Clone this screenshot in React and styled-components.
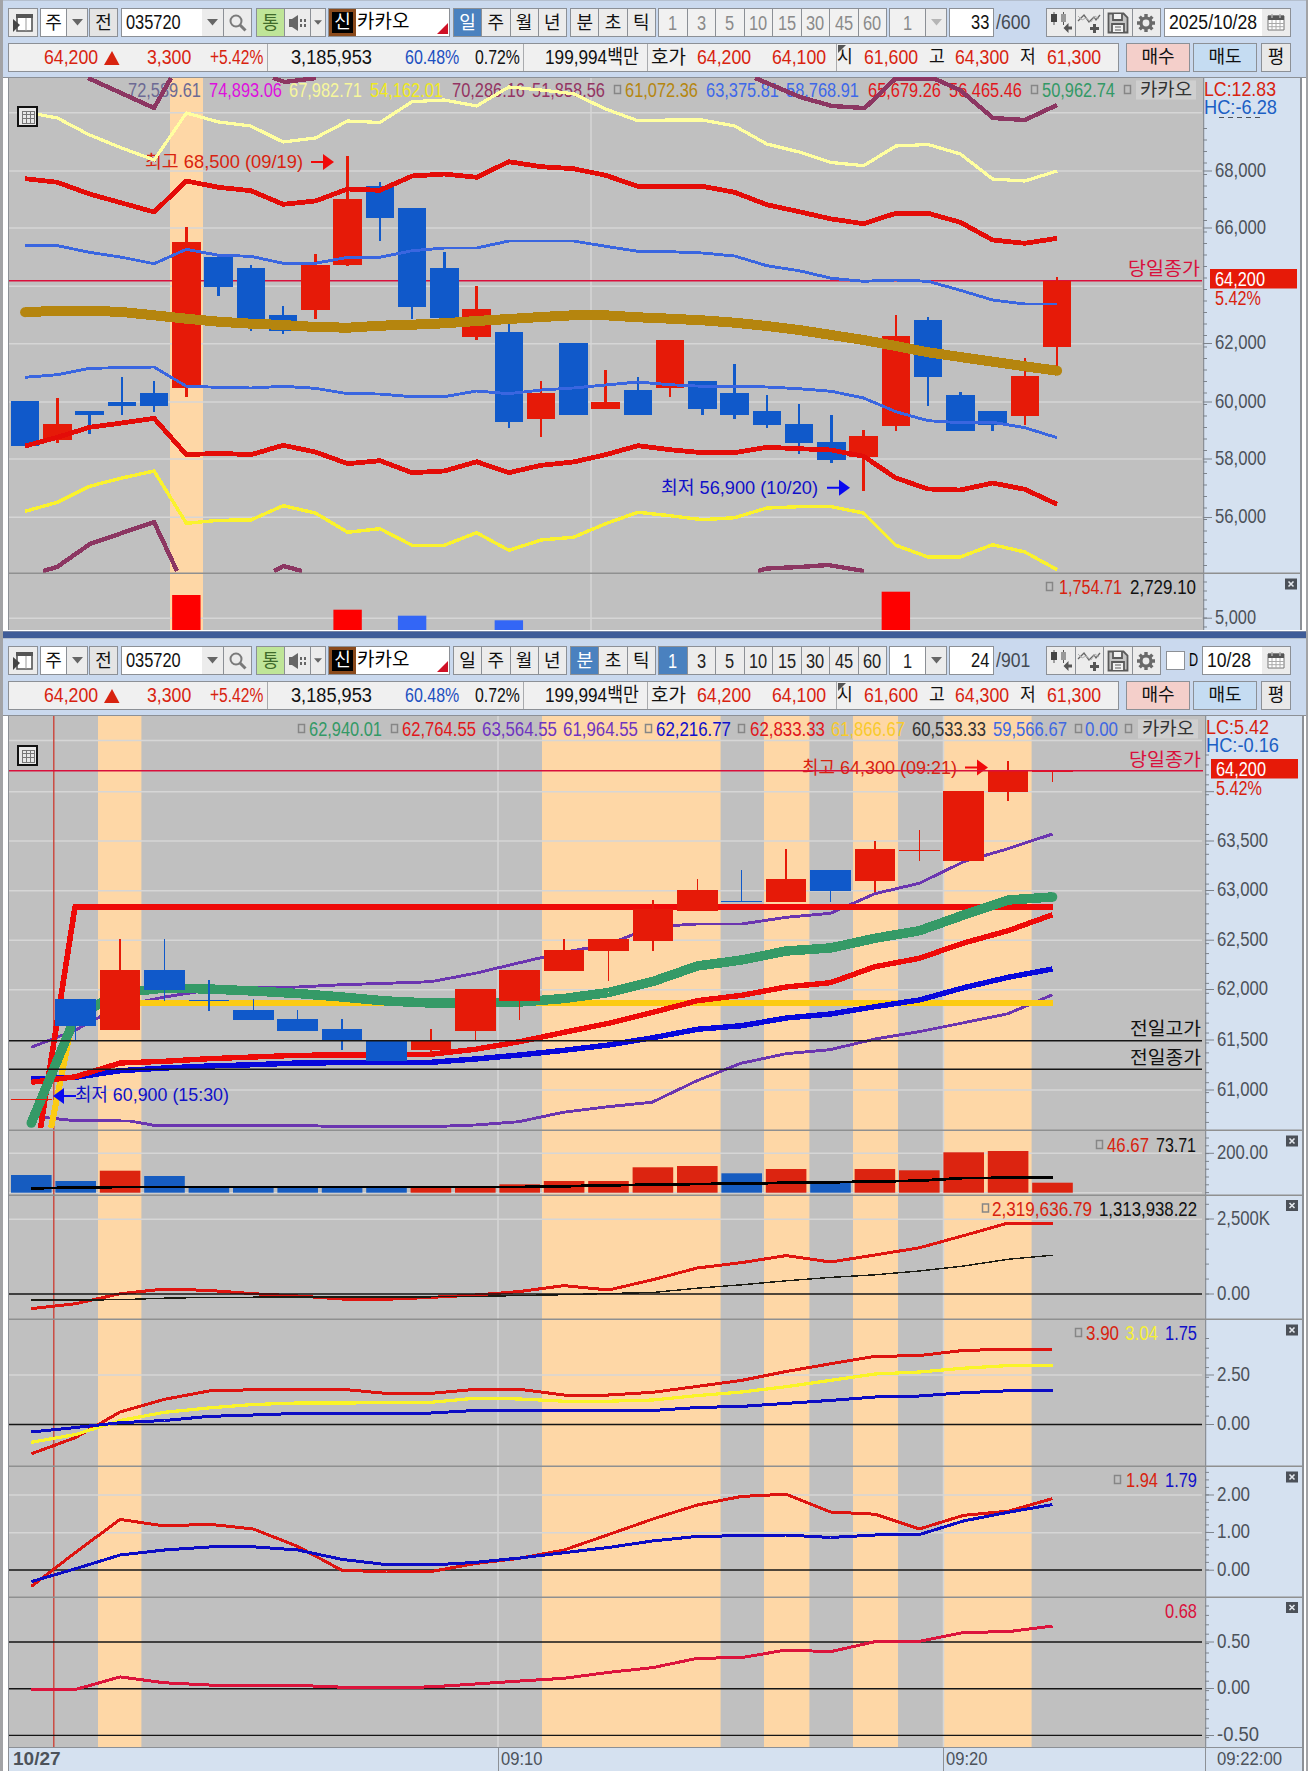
import React from 'react';
import styled, { createGlobalStyle } from 'styled-components';

const colors = {
  frame: '#a2a3a6',
  header: '#cad9ee',
  axis: '#d5e1f0',
  plot: '#c0c0c0',
  grid: '#d6d6d6',
  border: '#8c9096',
  divider: '#8f9090',
  band: '#fed7a6',
  up: '#e61a08',
  down: '#1059ca',
  crimson: '#d9103c',
  tick: '#7d838b',
  label: '#4c525a',
};

const fontStack = "'Liberation Sans', 'Noto Sans CJK KR', sans-serif";

const GlobalStyle = createGlobalStyle`
  * { box-sizing: border-box; }
  body {
    margin: 0;
    background: ${colors.header};
    font-family: ${fontStack};
  }
`;

const Page = styled.div`
  width: 1308px;
  height: 1771px;
  overflow: hidden;
  border-left: 3px solid ${colors.frame};
  border-right: 2px solid ${colors.frame};
  background: ${colors.header};
`;

const Window = styled.section`
  display: flex;
  flex-direction: column;
  height: ${p => p.$height}px;
  overflow: hidden;
`;

const Splitter = styled.div`
  height: 7px;
  background: #3f5c98;
  border-top: 1px solid #7584a5;
`;

const HeaderArea = styled.header`
  display: flex;
  flex-direction: column;
  gap: 6px;
  height: 77px;
  padding: 7px 0 0 5px;
  border-top: 1px solid #b4bfce;
`;

const Row = styled.div`
  display: flex;
  height: 29px;
`;

const Group = styled.div`
  display: flex;
  flex: none;
  width: ${p => p.$w}px;
  height: 29px;
  margin-left: ${p => p.$ml || 0}px;
  border: 1.5px solid ${colors.border};
  background: ${p => p.$bg || '#fff'};
`;

const ToolButton = styled.div`
  display: flex;
  align-items: center;
  justify-content: center;
  flex: ${p => (p.$w ? 'none' : '1 1 0')};
  width: ${p => (p.$w ? `${p.$w}px` : 'auto')};
  background: ${p => (p.$active ? '#4a81bf' : p.$bg || '#ececec')};
  color: ${p => (p.$active ? '#fff' : p.$color || '#111')};
  font-size: ${p => p.$size || 18}px;
  line-height: 26px;
  white-space: nowrap;

  & + & {
    border-left: 1px solid ${colors.border};
  }
`;

// tall, condensed digits
const Squeeze = styled.span`
  display: inline-block;
  transform: scaleX(${p => p.$sx || 0.82});
  transform-origin: ${p => p.$from || 'center'};
`;

const Field = styled.div`
  flex: 1;
  min-width: 0;
  padding: 0 4px;
  text-align: ${p => p.$align || 'left'};
  background: #fff;
  color: #111;
  font-size: 20px;
  line-height: 26px;
  white-space: nowrap;
`;

const Total = styled.div`
  width: 52px;
  padding-left: 2px;
  color: #444a52;
  font-size: 20px;
  line-height: 29px;
`;

const StockBadge = styled.div`
  width: 27px;
  border: 3px solid #8a4a1c;
  background: #000;
  color: #fff;
  font-size: 18px;
  line-height: 20px;
  text-align: center;
`;

const NameField = styled.div`
  flex: 1;
  display: flex;
  justify-content: space-between;
  align-items: flex-end;
  padding: 0 1px 2px 1px;
  font-size: 19px;
  line-height: 25px;
`;

const Corner = styled.i`
  border-left: 11px solid transparent;
  border-bottom: 11px solid #cf1126;
`;

const CheckBox = styled.div`
  width: 19px;
  height: 19px;
  margin: 5px 4px 0 5px;
  border: 1px solid ${colors.border};
  background: #fff;
`;

const CheckLabel = styled.div`
  width: 13px;
  font-size: 18px;
  line-height: 28px;
`;

const Quote = styled.div`
  display: flex;
  width: 1111px;
  height: 29px;
  border: 1.5px solid ${colors.border};
  background: #f0f0f0;
`;

const Segment = styled.div`
  display: flex;
  position: relative;
  flex: none;
  width: ${p => p.$w}px;

  & + & {
    border-left: 1px solid #a9abae;
  }
`;

const Value = styled.span`
  flex: none;
  width: ${p => p.$w}px;
  margin-left: ${p => p.$ml || 0}px;
  color: ${p => p.$color || '#111'};
  font-size: ${p => p.$size || 20}px;
  line-height: 27px;
  white-space: nowrap;
  transform: scaleX(${p => p.$sx || 0.885});
  transform-origin: left;
`;

const Flag = styled.i`
  position: absolute;
  left: 1px;
  top: 1px;
  border-top: 8px solid #555;
  border-right: 8px solid transparent;
`;

const TradeButton = styled.div`
  width: ${p => p.$w}px;
  height: 29px;
  margin-left: ${p => p.$ml}px;
  border: 1.5px solid ${colors.border};
  background: ${p => p.$bg};
  color: #111;
  font-size: 18px;
  line-height: 26px;
  text-align: center;
`;

const Panes = styled.div`
  display: flex;
  flex-direction: column;
  flex: 1;
  padding-left: 5px;
  background: #fff;
  box-shadow: inset 0 1px 0 ${colors.border};
`;

const Pane = styled.div`
  display: flex;
  height: ${p => p.$h}px;
  width: ${p => p.$w}px;
  border-left: 1px solid ${colors.border};
  border-right: 2px solid ${colors.border};
`;

const Plot = styled.svg`
  flex: none;
  display: block;
  background: ${colors.plot};
`;

const Scale = styled.svg`
  flex: none;
  display: block;
  background: ${colors.axis};
`;

const TimeAxis = styled.div`
  display: flex;
  width: 1296px;
  height: 24px;
  border: 1px solid ${colors.border};
  border-width: 1px 2px 0 1px;
  background: ${colors.axis};
  color: ${colors.label};
  font-size: 19px;
  line-height: 22px;
`;

const TimeCell = styled.div`
  width: ${p => p.$w}px;
  padding-left: ${p => p.$pad}px;
  font-weight: ${p => (p.$bold ? 700 : 400)};

  & + & {
    border-left: 1px solid ${colors.border};
  }
`;

/* ---------- icons ---------- */

const Caret = ({ size = 11, color = '#666' }) => (
  <svg width={size} height={size / 2 + 1} viewBox="0 0 12 7">
    <path d="M0 0h12L6 7z" fill={color} />
  </svg>
);

const DockIcon = () => (
  <svg width="22" height="22" viewBox="0 0 22 22">
    <path d="M5 3h15v16H5z" fill="#fff" stroke="#555" strokeWidth="1.6" />
    <path d="M4 2h17v4H4z" fill="#555" />
    <path d="M14 6v13" stroke="#999" />
    <path d="M1 7l7 6-7 7z" fill="#444" />
  </svg>
);

const SearchIcon = () => (
  <svg width="20" height="20" viewBox="0 0 20 20" fill="none" stroke="#7a7a7a">
    <circle cx="8" cy="8" r="5.5" strokeWidth="2" />
    <path d="M12 12l5.5 5.5" strokeWidth="3" />
  </svg>
);

const SpeakerIcon = () => (
  <svg width="20" height="18" viewBox="0 0 20 18" fill="#666">
    <path d="M1 5h3l6-4v16l-6-4H1z" />
    <path d="M12 5h2v3h-2zM16 5h2v3h-2zM12 10h2v3h-2zM16 10h2v3h-2z" />
  </svg>
);

const CandleIcon = () => (
  <svg width="24" height="24" viewBox="0 0 24 24">
    <path d="M5 1v13M14.500 1v13" stroke="#555" />
    <path d="M2 3h6v8H2z" fill="#444" />
    <path d="M12 3h5v8h-5z" fill="#999" />
    <path d="M14.500 17l5-5v3.500h3.500v3h-3.500v3.500z" fill="#555" />
  </svg>
);

const TrendIcon = () => (
  <svg width="24" height="24" viewBox="0 0 24 24" fill="none">
    <path d="M1 10l6-6 5 7 5-5 2 3 4-5" stroke="#666" strokeWidth="1.3" />
    <path d="M1 5l4 4 4-2 5 4 4-6 4 3" stroke="#b0b0b0" />
    <path d="M17.500 13v9M13 17.500h9" stroke="#555" strokeWidth="3" />
  </svg>
);

const SaveIcon = () => (
  <svg width="22" height="22" viewBox="0 0 22 22" fill="none" stroke="#5a5a5a" strokeWidth="1.8">
    <path d="M1.500 1.500h15l4 4v15h-19z" fill="#c4c4c4" />
    <path d="M6 2v6h9V2" fill="#f2f2f2" />
    <path d="M5 20v-8h12v8" fill="#f2f2f2" />
    <path d="M8 15h6M8 18h6" strokeWidth="1.2" />
  </svg>
);

const GearIcon = () => (
  <svg width="20" height="20" viewBox="-10 -10 20 20" fill="none" stroke="#6a6a6a">
    <circle r="5" strokeWidth="3.2" />
    {[0, 45, 90, 135].map(a => (
      <path key={a} d="M0 -9v3.500M0 5.500v3.500" strokeWidth="3.400" transform={`rotate(${a})`} />
    ))}
  </svg>
);

const CalendarIcon = () => (
  <svg width="18" height="17" viewBox="0 0 18 17">
    <path d="M1 2h16v14H1z" fill="#fff" stroke="#777" />
    <path d="M1 1.500h16v4.500H1z" fill="#555" />
    <path d="M5 0v4M13 0v4" stroke="#aaa" strokeWidth="1.5" />
    <path d="M1 9.500h16M1 12.700h16M5 6v10M9 6v10M13 6v10" stroke="#aaa" />
  </svg>
);

/* ---------- header ---------- */

const Toolbar = ({ minute }) => {
  const minuteBg = minute ? '#ececec' : '#f1f1f1';
  const minuteColor = minute ? '#222' : '#8a8a8a';
  return (
    <Row>
      <Group $w={30}><ToolButton><DockIcon /></ToolButton></Group>
      <Group $w={48} $ml={2}>
        <ToolButton $bg="#fff">주</ToolButton>
        <ToolButton $w={21}><Caret /></ToolButton>
      </Group>
      <Group $w={29} $ml={1}><ToolButton $bg="#e4e4e4">전</ToolButton></Group>
      <Group $w={131} $ml={3}>
        <Field><Squeeze $from="left">035720</Squeeze></Field>
        <ToolButton $w={21}><Caret /></ToolButton>
        <ToolButton $w={28}><SearchIcon /></ToolButton>
      </Group>
      <Group $w={70} $ml={4}>
        <ToolButton $w={27} $bg="#bfe598" $color="#3f6b2a">통</ToolButton>
        <ToolButton><SpeakerIcon /></ToolButton>
        <ToolButton $w={15}><Caret size={8} /></ToolButton>
      </Group>
      <Group $w={122} $ml={2}>
        <StockBadge>신</StockBadge>
        <NameField>카카오<Corner /></NameField>
      </Group>
      <Group $w={114} $ml={3}>
        {['일', '주', '월', '년'].map((t, i) => (
          <ToolButton key={t} $active={!minute && i === 0}>{t}</ToolButton>
        ))}
      </Group>
      <Group $w={86} $ml={3}>
        {['분', '초', '틱'].map((t, i) => (
          <ToolButton key={t} $active={minute && i === 0}>{t}</ToolButton>
        ))}
      </Group>
      <Group $w={229} $ml={2}>
        {[1, 3, 5, 10, 15, 30, 45, 60].map(n => (
          <ToolButton key={n} $size={20} $bg={minuteBg} $color={minuteColor} $active={minute && n === 1}>
            <Squeeze>{n}</Squeeze>
          </ToolButton>
        ))}
      </Group>
      <Group $w={58} $ml={2}>
        <ToolButton $size={20} $bg={minute ? '#fff' : '#f1f1f1'} $color={minuteColor}>
          <Squeeze>1</Squeeze>
        </ToolButton>
        <ToolButton $w={21}><Caret color={minute ? '#666' : '#b5b5b5'} /></ToolButton>
      </Group>
      <Group $w={45} $ml={2}>
        <Field $align="right"><Squeeze $from="right">{minute ? 24 : 33}</Squeeze></Field>
      </Group>
      <Total><Squeeze $sx={0.88} $from="left">{minute ? '/901' : '/600'}</Squeeze></Total>
      <Group $w={115}>
        <ToolButton><CandleIcon /></ToolButton>
        <ToolButton><TrendIcon /></ToolButton>
        <ToolButton><SaveIcon /></ToolButton>
        <ToolButton><GearIcon /></ToolButton>
      </Group>
      {minute && <CheckBox />}
      {minute && <CheckLabel><Squeeze $sx={0.7} $from="left">D</Squeeze></CheckLabel>}
      <Group $w={minute ? 89 : 127} $ml={minute ? 0 : 3}>
        <Field><Squeeze $sx={0.88} $from="left">{minute ? '10/28' : '2025/10/28'}</Squeeze></Field>
        <ToolButton $w={28}><CalendarIcon /></ToolButton>
      </Group>
    </Row>
  );
};

const RED = '#d8230f';

const QuoteRow = () => (
  <Row>
    <Quote>
      <Segment $w={258}>
        <Value $ml={35} $w={60} $color={RED}>64,200</Value>
        <svg width="16" height="26" viewBox="0 0 16 26"><path d="M8 7l7.500 14H0z" fill={RED} /></svg>
        <Value $ml={27} $w={63} $color={RED}>3,300</Value>
        <Value $w={56} $sx={0.78} $color={RED}>+5.42%</Value>
      </Segment>
      <Segment $w={256}>
        <Value $ml={23} $w={114} $sx={0.91}>3,185,953</Value>
        <Value $w={70} $sx={0.8} $color="#1c4fc0">60.48%</Value>
        <Value $w={47} $sx={0.79}>0.72%</Value>
      </Segment>
      <Segment $w={124}><Value $ml={21} $w={98} $sx={0.86}>199,994백만</Value></Segment>
      <Segment $w={189}>
        <Value $ml={3} $w={46} $size={19} $sx={1}>호가</Value>
        <Value $w={75} $color={RED}>64,200</Value>
        <Value $w={58} $color={RED}>64,100</Value>
      </Segment>
      <Segment $w={280}>
        <Flag />
        <Value $w={27} $size={18} $sx={0.95}>시</Value>
        <Value $w={65} $color={RED}>61,600</Value>
        <Value $w={26} $size={18} $sx={0.95}>고</Value>
        <Value $w={65} $color={RED}>64,300</Value>
        <Value $w={27} $size={18} $sx={0.95}>저</Value>
        <Value $w={60} $color={RED}>61,300</Value>
      </Segment>
    </Quote>
    <TradeButton $ml={7} $w={64} $bg="#f4cfca">매수</TradeButton>
    <TradeButton $ml={3} $w={64} $bg="#c5dcf2">매도</TradeButton>
    <TradeButton $ml={4} $w={30} $bg="#e8e8e8">평</TradeButton>
  </Row>
);

/* ---------- chart parts ---------- */

// y is the vertical middle of the digits, w the drawn width
const Label = ({ x, y, w, fill = colors.label, size = 20, children }) => (
  <text
    x={x}
    y={y + size * 0.36}
    fill={fill}
    fontSize={size}
    fontFamily={fontStack}
    textLength={w}
    lengthAdjust="spacingAndGlyphs"
  >
    {children}
  </text>
);

const Marker = ({ x, y }) => (
  <rect x={x + 0.5} y={y - 4.5} width="6" height="8" fill="none" stroke="#868686" strokeWidth="1.5" />
);

const Line = ({ xs, ys, color, width }) => (
  <polyline
    points={ys.map((y, i) => `${xs(i)},${y}`).join(' ')}
    fill="none"
    stroke={color}
    strokeWidth={width}
    strokeLinejoin="round"
    shapeRendering="crispEdges"
  />
);

const Path = ({ d, color, width }) => (
  <path d={d} fill="none" stroke={color} strokeWidth={width} strokeLinejoin="round" shapeRendering="crispEdges" />
);

const HLines = ({ ys, color = colors.grid, width = 1.5 }) =>
  ys.map(y => <path key={y} d={`M9 ${y}H1202`} stroke={color} strokeWidth={width} />);

// candle: [up, bodyTop, bodyBottom, high, low]
const Candles = ({ data, xs, body, wick }) => (
  <g shapeRendering="crispEdges">
    {data.map(([up, top, bottom, high = top, low = bottom], i) => {
      const color = up ? colors.up : colors.down;
      return (
        <g key={i} fill={color}>
          <rect x={xs(i) - wick / 2} y={high} width={wick} height={low - high} />
          <rect x={xs(i) - body / 2} y={top} width={body} height={Math.max(bottom - top, 1.3)} />
        </g>
      );
    })}
  </g>
);

const Arrow = ({ x, y, color, flip }) => (
  <path
    d="M0 -1h12v-7l11 8-11 8v-7H0z"
    fill={color}
    transform={`translate(${x} ${y}) scale(${flip ? -1 : 1} 1)`}
  />
);

const NameTag = ({ x, y }) => (
  <g>
    <rect x={x} y={y - 9.5} width="60" height="19" fill="#cfcfcf" />
    <Label x={x + 4} y={y} w={52} fill="#333" size={18}>카카오</Label>
  </g>
);

const TableIcon = ({ x, y }) => (
  <g fill="none" stroke="#111" shapeRendering="crispEdges">
    <rect x={x} y={y} width="19" height="19" fill="#e8e8e8" strokeWidth="2" />
    <path
      d={`M${x + 4} ${y + 4}h12v12h-12zM${x + 4} ${y + 7}h12M${x + 4} ${y + 11}h12M${x + 8} ${y + 4}v12M${x + 12} ${y + 4}v12`}
      stroke="#777"
    />
  </g>
);

const CloseBox = ({ x, y }) => (
  <g>
    <rect x={x} y={y - 5.5} width="12" height="11" fill="#4b5058" />
    <path d={`M${x + 3.500} ${y - 2.500}l5 5M${x + 8.500} ${y - 2.500}l-5 5`} stroke="#e4e8ee" strokeWidth="1.600" />
  </g>
);

const Ticks = ({ x, from, to, step }) => {
  const d = [];
  for (let y = from; y <= to; y += step) d.push(`M${x} ${y}h4`);
  return <path d={d.join('')} stroke={colors.tick} />;
};

const AxisLabels = ({ x, items }) =>
  items.map(([y, text, w]) => (
    <g key={text}>
      <path d={`M${x} ${y + 1.5}h9`} stroke={colors.tick} />
      <Label x={x + 12} y={y} w={w}>{text}</Label>
    </g>
  ));

const PriceTag = ({ x, y }) => (
  <g>
    <Label x={x + 11} y={y + 18.5} w={46} fill={RED}>5.42%</Label>
    <rect x={x + 6} y={y - 10} width="87" height="19.500" fill={colors.up} />
    <Label x={x + 11} y={y} w={50} fill="#fff">64,200</Label>
  </g>
);

const ChartPane = ({ top, bottom, split, right, plot, scale, last }) => {
  const h = bottom - top;
  return (
    <Pane $h={h} $w={right - 8}>
      <Plot width={split - 9} height={h} viewBox={`9 ${top} ${split - 9} ${h}`}>
        {plot}
        {!last && <path d={`M9 ${bottom - 0.75}H${split}`} stroke={colors.divider} strokeWidth="1.5" />}
      </Plot>
      <Scale width={right - split - 2} height={h} viewBox={`${split} ${top} ${right - split - 2} ${h}`}>
        <path d={`M${split + 0.5} ${top}V${bottom}`} stroke={colors.border} strokeWidth="1.5" />
        {scale}
        {!last && <path d={`M${split} ${bottom - 0.75}H${right}`} stroke={colors.divider} strokeWidth="1.5" />}
      </Scale>
    </Pane>
  );
};

/* ---------- daily chart ---------- */

const dayX = i => 25.1 + 32.25 * i;

const dayCandles = [
  [0, 402.3, 447.3],
  [1, 425, 441.3, 399.3, 444],
  [0, 411.7, 416, 411.7, 435.3],
  [0, 403, 407, 378.3, 416],
  [0, 394, 407, 381.7, 412.7],
  [1, 243.3, 388.7, 228.3, 397.7],
  [0, 258.3, 288.3, 258.3, 297.3],
  [0, 269, 320, 266, 331.7],
  [0, 315.7, 331.7, 306.7, 334.7],
  [1, 265.7, 311, 255.3, 320],
  [1, 200, 265.7, 156.7, 267],
  [0, 186.7, 219.3, 183.3, 242],
  [0, 209, 308, 209, 320],
  [0, 269, 319, 252.7],
  [1, 309.7, 338.3, 286.7, 340.7],
  [0, 333.3, 423.3, 324, 429.3],
  [1, 393.7, 420.3, 381.7, 438.3],
  [0, 344, 416],
  [1, 402.7, 410, 371],
  [0, 390.7, 416, 378.3],
  [1, 341, 388.7, 341, 397.7],
  [0, 381.7, 410, 381.7, 415.7],
  [0, 394, 416, 365, 420],
  [0, 411.7, 426.3, 396.3, 429],
  [0, 425, 444.3, 405.3, 454.7],
  [0, 442.7, 460.7, 416, 463.7],
  [1, 437, 457.7, 431, 492.3],
  [1, 336.7, 426.7, 315.7, 432.3],
  [0, 321.3, 378.3, 318.3, 406.7],
  [0, 396.3, 432.3, 393.3],
  [0, 411.7, 426.3, 411.7, 432.3],
  [1, 377, 417.3, 359, 426.3],
  [1, 281.7, 348.3, 278, 368],
];

const dayLines = {
  pale: [113, 119, 136, 149, 161, 114, 123, 127, 143, 139, 122, 123.5, 102.7, 101, 107, 88, 91, 94.7, 110, 121.7, 121, 121, 127, 145, 153, 163.5, 166.7, 147, 145.5, 155, 180, 182, 172],
  redUp: [179.7, 183.3, 195, 204, 213, 182, 188.3, 191.7, 205.3, 202, 190, 191.3, 177, 175, 178.3, 162.7, 167.7, 169.7, 176.3, 187.3, 187.3, 187.3, 193.3, 205.7, 212.7, 220, 224.7, 214.3, 214.3, 223.3, 241, 244.3, 239.3],
  blueUp: [246.7, 246.7, 253.3, 258.3, 264.7, 250.3, 256.3, 257.3, 264.3, 264.3, 258.3, 258.3, 251.7, 249, 249, 242, 242, 242, 247.3, 252.3, 252.7, 254, 257, 266.7, 271.7, 279.3, 282.3, 281, 282.3, 291.3, 301, 305, 305],
  gold: [313.3, 311.7, 311.7, 313, 316.3, 319.7, 322.7, 324.7, 326, 328, 328.7, 326.7, 325.7, 324.3, 322, 320, 318, 316.3, 316.3, 318.3, 319.7, 321.3, 323.7, 327, 331, 336, 341, 347, 353.3, 358, 362.7, 367.3, 371.7],
  blueLow: [378.3, 375.7, 369.3, 368.7, 368, 387.3, 388.3, 389, 387.3, 389.3, 394.7, 395, 397.7, 397.7, 392, 394.7, 391, 389, 386, 383, 385.7, 387.3, 387.3, 388, 389.7, 392.3, 399, 412.7, 421.7, 423.7, 423.3, 428.7, 438.7],
  redLow: [447, 438.3, 428.3, 424, 419.3, 455.7, 454.3, 455.7, 446.3, 453, 464.7, 461.7, 473.7, 472, 462.7, 473.7, 466.3, 463, 455.7, 446.7, 450.7, 453.7, 453.7, 448.3, 449.7, 451, 457.3, 479, 490, 491, 484, 490.3, 505.3],
  yellow: [512.3, 503.3, 487.3, 479, 472, 524.3, 521.3, 521, 506.7, 514, 533.3, 529.7, 546.3, 546.3, 533.7, 551.3, 541, 538.3, 524.7, 513.3, 516.7, 520.7, 518.7, 509, 507.7, 507.7, 514, 546.3, 558, 558, 545.7, 553, 570.7],
};

const dayLegend = [
  [128, '72,589.61', '#6d6a94'],
  [209, '74,893.06', '#dd10dd'],
  [289, '67,982.71', '#f7f79c'],
  [370, '54,162.01', '#f0ea20'],
  [452, '70,286.16', '#943462'],
  [532, '51,858.56', '#943462'],
  [625, '61,072.36', '#b5860f'],
  [706, '63,375.81', '#3e68e8'],
  [786, '58,768.91', '#3e68e8'],
  [868, '65,679.26', '#e0181c'],
  [949, '56,465.46', '#e0181c'],
  [1042, '50,962.74', '#339966'],
];

const DayChart = () => (
  <Panes>
    <ChartPane
      top={78}
      bottom={575}
      split={1203}
      right={1302}
      plot={(
        <>
          <rect x="170" y="78" width="33" height="500" fill={colors.band} />
          <HLines ys={[113.7, 172, 229, 287.3, 344.7, 403, 460, 518.3]} />
          <path d="M591 78V575" stroke={colors.grid} strokeWidth="1.5" />
          <path d="M9 78.500H1203" stroke={colors.border} />
          {dayLegend.map(([x, text, fill]) => (
            <Label key={text} x={x} y={90.7} w={73} fill={fill}>{text}</Label>
          ))}
          <Marker x={614} y={91} />
          <Marker x={1031} y={91} />
          <Marker x={1124} y={91} />
          <NameTag x={1136} y={91} />
          <Label x={145} y={162.5} w={158} fill={RED} size={18.5}>최고 68,500 (09/19)</Label>
          <Arrow x={311} y={163} color="#f00a0a" />
          <Label x={661} y={488} w={157} fill="#1010c8" size={18.5}>최저 56,900 (10/20)</Label>
          <Arrow x={827} y={488.7} color="#0a0af0" />
          <Label x={1128} y={270} w={72} fill={colors.crimson} size={18}>당일종가</Label>
          <path d="M9 281.700H1202" stroke={colors.crimson} strokeWidth="1.5" />
          <Candles data={dayCandles} xs={dayX} body={28.4} wick={2.4} />
          <Line xs={dayX} ys={dayLines.pale} color="#ffffa0" width={3.2} />
          <Path d="M88 79L154 109L171 79M273 79L285 83L316 79M755 79L767 84L800 98L832 107L864 109L868 106L895 80L935 80L960 91L993 119L1025 121L1057 106" color="#8c3662" width={4.4} />
          <Path d="M43 572L57 568L90 545L122 534L154 523L177 572M274 572L283.500 567L302 572M758 572L767 569.500L800 568L828 566L864 572" color="#8c3662" width={4.4} />
          <Line xs={dayX} ys={dayLines.redUp} color="#e40c08" width={4.8} />
          <Line xs={dayX} ys={dayLines.blueUp} color="#3a66e0" width={2.9} />
          <Line xs={dayX} ys={dayLines.blueLow} color="#3a66e0" width={2.9} />
          <Line xs={dayX} ys={dayLines.redLow} color="#e40c08" width={4.8} />
          <Line xs={dayX} ys={dayLines.yellow} color="#faf22e" width={3.4} />
          <Line xs={dayX} ys={dayLines.gold} color="#b5850e" width={10} />
          <circle cx={dayX(0)} cy="313.300" r="5" fill="#b5850e" />
          <circle cx={dayX(32)} cy="371.700" r="5" fill="#b5850e" />
          <TableIcon x={18} y={108} />
        </>
      )}
      scale={(
        <>
          <path d="M1203 78.500H1302" stroke={colors.border} />
          <Ticks x={1203} from={129.5} to={572} step={11.5} />
          <Label x={1204} y={89.5} w={72} fill={RED}>LC:12.83</Label>
          <Label x={1204} y={107.5} w={73} fill="#1b5fc4">HC:-6.28</Label>
          <path d="M1219 118.500H1264" stroke={colors.label} strokeDasharray="5 4" />
          <AxisLabels
            x={1203}
            items={[[170.5, '68,000', 51], [227.5, '66,000', 51], [343, '62,000', 51], [401.5, '60,000', 51], [458.5, '58,000', 51], [517, '56,000', 51]]}
          />
          <PriceTag x={1204} y={280} />
        </>
      )}
    />
    <ChartPane
      top={575}
      bottom={631}
      split={1203}
      right={1302}
      last
      plot={(
        <>
          <rect x="170" y="575" width="33" height="60" fill={colors.band} />
          <HLines ys={[619.3]} />
          <path d="M591 575V631" stroke={colors.grid} strokeWidth="1.5" />
          {[[5, 596, 1], [10, 610.7, 1], [12, 616.7, 0], [15, 621.3, 0], [27, 592.7, 1]].map(([i, y, up]) => (
            <rect key={i} x={dayX(i) - 14.2} y={y} width="28.4" height={631 - y} fill={up ? '#fe0000' : '#3366f6'} />
          ))}
          <Marker x={1046} y={588} />
          <Label x={1059} y={587.5} w={63} fill={RED}>1,754.71</Label>
          <Label x={1130} y={587.5} w={66} fill="#111">2,729.10</Label>
        </>
      )}
      scale={(
        <>
          <Ticks x={1203} from={583} to={630} step={9} />
          <AxisLabels x={1203} items={[[617.7, '5,000', 41]]} />
          <CloseBox x={1285} y={585} />
        </>
      )}
    />
  </Panes>
);

/* ---------- minute chart ---------- */

const minX = i => 31.3 + 44.4 * i;

const minCandles = [
  [1, 1098.5, 1099.5],
  [0, 999.3, 1025.7, 999.3, 1040.7],
  [1, 969.7, 1030.3, 939.3],
  [0, 969.7, 990, 939.3, 1000.7],
  [0, 999.5, 1000.5, 980, 1011],
  [0, 1010, 1020.3, 999.3],
  [0, 1019.3, 1030.7, 1010],
  [0, 1029.3, 1041, 1019, 1050.3],
  [0, 1041, 1060.7],
  [1, 1041, 1050.3, 1029.3, 1055],
  [1, 989, 1030.7, 989, 1040.7],
  [1, 969.7, 1001, 969.7, 1020.3],
  [1, 950, 971, 939.3],
  [1, 939.3, 951, 939.3, 981],
  [1, 908.7, 940.7, 900.3, 951],
  [1, 890, 910.7, 879.3],
  [0, 900.7, 901.8, 870.3],
  [1, 879.3, 901.7, 849.3],
  [0, 870.3, 891.3, 870.3, 901.7],
  [1, 849.3, 880.7, 840.7, 892.3],
  [1, 849.8, 850.8, 830, 861.3],
  [1, 791, 861.3],
  [1, 770.7, 792.3, 761, 801.3],
  [1, 770.2, 771.3, 770.7, 782],
];

const minLines = {
  green: [1123, 1016, 993, 988, 989, 991, 993.5, 997, 1001, 1003, 1003, 1002, 998.5, 992.5, 981.5, 966, 960, 951, 948, 938.3, 930.7, 915, 900, 897],
  red: [1082.3, 1076.7, 1063, 1061.3, 1058.7, 1057, 1055.3, 1055, 1055, 1054.3, 1049.3, 1041.7, 1032.3, 1023.3, 1012.3, 1000.7, 995.3, 987, 982.7, 966.7, 958.3, 943, 930.7, 914.7],
  blue: [1079, 1077.3, 1070.7, 1068, 1066, 1064.7, 1063, 1062.7, 1062.7, 1062.3, 1059, 1055, 1050.3, 1045, 1037.7, 1029.3, 1025.7, 1018, 1014, 1006.7, 1000, 987.7, 977.3, 969],
  purpleUp: [1047.3, 1030, 1006, 997, 990, 988, 987, 984.7, 983.3, 981.7, 973.3, 962.7, 952.3, 944.3, 926.7, 924, 924, 917.3, 913.3, 893.7, 883.3, 861.7, 848.7, 834],
};

// [top, up]
const minVolume = [
  [1175, 0], [1181, 0], [1170.7, 1], [1176, 0], [1187.7, 0], [1187.7, 0], [1187.7, 0], [1187.7, 0],
  [1187.7, 0], [1187.7, 1], [1187, 1], [1184.3, 1], [1181, 1], [1181, 1], [1167.3, 1], [1166, 1],
  [1173.3, 0], [1169, 1], [1182.7, 0], [1169, 1], [1170.3, 1], [1152.3, 1], [1151, 1], [1182.7, 1],
];

const minLegend = [
  [309, '62,940.01', '#339966', 73],
  [402, '62,764.55', '#e0181c', 74],
  [482, '63,564.55', '#6f35c0', 75],
  [563, '61,964.55', '#6f35c0', 75],
  [656, '62,216.77', '#1010cc', 75],
  [750, '62,833.33', '#e0181c', 75],
  [831, '61,866.67', '#f8ca2c', 74],
  [912, '60,533.33', '#333', 74],
  [993, '59,566.67', '#4068e0', 74],
  [1085, '0.00', '#4068e0', 33],
];

const bands = [[98, 141.4], [542, 720.6], [764, 809.4], [853, 898], [943.3, 1031.6]];

const MinuteBackdrop = ({ top, bottom }) => (
  <g>
    {bands.map(([a, b]) => (
      <rect key={a} x={a} y={top} width={b - a} height={bottom - top} fill={colors.band} />
    ))}
    <path d={`M498 ${top}V${bottom}M943.500 ${top}V${bottom}`} stroke={colors.grid} strokeWidth="1.5" />
  </g>
);

const DayLine = ({ top, bottom }) => (
  <path d={`M53.800 ${top}V${bottom}`} stroke="#cc3a30" strokeWidth="1.3" />
);

const minPane = { split: 1205, right: 1304 };

const MinuteChart = () => (
  <Panes>
    <ChartPane
      {...minPane}
      top={715}
      bottom={1131}
      plot={(
        <>
          <MinuteBackdrop top={715} bottom={1131} />
          <HLines ys={[740.5, 791.7, 841, 890.7, 940.3, 989.7, 1090]} />
          <path d="M9 715.500H1205" stroke={colors.border} />
          <DayLine top={716} bottom={1131} />
          {minLegend.map(([x, text, fill, w]) => (
            <Label key={text} x={x} y={728.5} w={w} fill={fill}>{text}</Label>
          ))}
          {[298, 391, 645, 738, 1075, 1125].map(x => <Marker key={x} x={x} y={729} />)}
          <NameTag x={1138} y={729} />
          <Label x={802} y={767} w={155} fill={RED} size={18.5}>최고 64,300 (09:21)</Label>
          <Arrow x={965} y={767.5} color="#f00a0a" />
          <Label x={1129} y={760} w={72} fill={colors.crimson} size={18}>당일종가</Label>
          <Path d="M40 1117L75 1120.700L130 1121L154 1125.300L297 1125.300L341 1126.700L430 1126.700L475 1125L519 1121.700L563 1112.300L608 1106.700L652 1102.300L697 1080.700L741 1063.300L786 1053.700L830 1049.700L875 1039L919 1031.700L964 1022.700L1008 1013.700L1052.500 994.700" color="#6b35b0" width={2.9} />
          <Line xs={minX} ys={minLines.purpleUp} color="#6b35b0" width={2.9} />
          <Path d="M51 1128L76 1002.700H1053" color="#fccb12" width={6} />
          <Line xs={minX} ys={minLines.blue} color="#0808dc" width={5.4} />
          <Line xs={minX} ys={minLines.red} color="#ee0a08" width={5.4} />
          <Path d="M40.500 1128L75 906.700H1053" color="#ee0a08" width={5.6} />
          <Line xs={minX} ys={minLines.green} color="#359a67" width={9.5} />
          <circle cx={minX(0)} cy="1123" r="4.800" fill="#359a67" />
          <circle cx={minX(23)} cy="897" r="4.800" fill="#359a67" />
          <Candles data={minCandles} xs={minX} body={40.6} wick={1.4} />
          <path d="M9 770.700H1203" stroke={colors.crimson} strokeWidth="1.5" />
          <HLines ys={[1040.7, 1069.3]} color="#151515" width={1.4} />
          <Label x={1130} y={1028.5} w={71} fill="#111" size={18}>전일고가</Label>
          <Label x={1130} y={1057.5} w={71} fill="#111" size={18}>전일종가</Label>
          <Label x={75} y={1094.5} w={154} fill="#1010c8" size={18.5}>최저 60,900 (15:30)</Label>
          <Arrow x={76} y={1096} color="#0a0af0" flip />
          <TableIcon x={18} y={746} />
        </>
      )}
      scale={(
        <>
          <path d="M1205 715.500H1304" stroke={colors.border} />
          <Ticks x={1205} from={755} to={1128} step={9.93} />
          <Label x={1206} y={727} w={63} fill={RED}>LC:5.42</Label>
          <Label x={1206} y={745} w={73} fill="#1b5fc4">HC:-0.16</Label>
          <path d="M1205 791.700h9" stroke={colors.tick} />
          <AxisLabels
            x={1205}
            items={[[839.5, '63,500', 51], [889, '63,000', 51], [938.7, '62,500', 51], [988, '62,000', 51], [1038.5, '61,500', 51], [1088.5, '61,000', 51]]}
          />
          <PriceTag x={1205} y={769} />
        </>
      )}
    />
    <ChartPane
      {...minPane}
      top={1131}
      bottom={1196}
      plot={(
        <>
          <MinuteBackdrop top={1131} bottom={1196} />
          <HLines ys={[1153.3, 1192.7]} />
          {minVolume.map(([y, up], i) => (
            <rect key={i} x={minX(i) - 20.3} y={y} width="40.6" height={1192.7 - y} fill={up ? '#dc2410' : '#165cc0'} />
          ))}
          <DayLine top={1131} bottom={1196} />
          <Path d="M31 1188.300L119 1187H519L563 1186.300L608 1185.300L697 1184L741 1183.700L786 1182.700L830 1182.300L919 1180.700L964 1178L1053 1177.700" color="#000" width={2.8} />
          <Marker x={1096} y={1145} />
          <Label x={1107} y={1144.5} w={42} fill={RED}>46.67</Label>
          <Label x={1156} y={1144.5} w={40} fill="#111">73.71</Label>
        </>
      )}
      scale={(
        <>
          <Ticks x={1205} from={1138} to={1194} step={7.8} />
          <AxisLabels x={1205} items={[[1151.8, '200.00', 51]]} />
          <CloseBox x={1286} y={1141} />
        </>
      )}
    />
    <ChartPane
      {...minPane}
      top={1196}
      bottom={1320}
      plot={(
        <>
          <MinuteBackdrop top={1196} bottom={1320} />
          <HLines ys={[1219.3]} />
          <DayLine top={1196} bottom={1320} />
          <Line
            xs={minX}
            ys={[1308.6, 1303.7, 1293.7, 1289, 1290.4, 1293.7, 1296, 1299, 1299.3, 1297.4, 1295, 1291.5, 1285.6, 1290, 1279.7, 1268, 1262.6, 1255.6, 1262, 1255, 1247.8, 1235.6, 1223, 1223]}
            color="#e01510"
            width={3}
          />
          <Line
            xs={minX}
            ys={[1300, 1300, 1299.7, 1298.2, 1297.4, 1297.2, 1297, 1297, 1297, 1296.8, 1296.5, 1295.5, 1294.7, 1293.5, 1292.5, 1288.2, 1284.8, 1280.8, 1277.4, 1274.8, 1271, 1266, 1259.3, 1255.2]}
            color="#1c1c14"
            width={1.4}
          />
          <HLines ys={[1294]} color="#151515" width={1.4} />
          <Marker x={982} y={1208.5} />
          <Label x={992} y={1208.5} w={100} fill={RED}>2,319,636.79</Label>
          <Label x={1099} y={1208.5} w={98} fill="#111">1,313,938.22</Label>
        </>
      )}
      scale={(
        <>
          <Ticks x={1205} from={1204.3} to={1296} step={14.95} />
          <AxisLabels x={1205} items={[[1217.5, '2,500K', 53], [1292.5, '0.00', 33]]} />
          <CloseBox x={1286} y={1205.5} />
        </>
      )}
    />
    <ChartPane
      {...minPane}
      top={1320}
      bottom={1467}
      plot={(
        <>
          <MinuteBackdrop top={1320} bottom={1467} />
          <HLines ys={[1375]} />
          <DayLine top={1320} bottom={1467} />
          <HLines ys={[1424.5]} color="#151515" width={1.4} />
          <Line
            xs={minX}
            ys={[1453.8, 1437.5, 1412, 1399.3, 1391, 1389.7, 1389.3, 1389.3, 1393.4, 1393.4, 1389.3, 1389.3, 1395, 1395, 1392.3, 1386.4, 1380.4, 1371.5, 1363.8, 1356.4, 1355.6, 1350.4, 1349.3, 1349]}
            color="#dd1410"
            width={3}
          />
          <Line
            xs={minX}
            ys={[1442.3, 1434.5, 1420.5, 1412.3, 1407.9, 1404.5, 1403, 1403, 1402.7, 1402.3, 1398.2, 1399, 1401.2, 1401.2, 1400, 1395.6, 1392, 1386.7, 1380.4, 1374, 1372, 1368.2, 1365.6, 1365.6]}
            color="#faf428"
            width={3.2}
          />
          <Line
            xs={minX}
            ys={[1432, 1427.5, 1422.7, 1420.5, 1416.4, 1415, 1413.4, 1413.4, 1413.4, 1413, 1410.5, 1410.5, 1410.5, 1410.5, 1410.5, 1407.5, 1406.4, 1403.4, 1400.4, 1397, 1396, 1392.7, 1390.8, 1390.8]}
            color="#0c0cc4"
            width={3}
          />
          <Marker x={1075} y={1333} />
          <Label x={1086} y={1333} w={33} fill={RED}>3.90</Label>
          <Label x={1125} y={1333} w={33} fill="#f6f036">3.04</Label>
          <Label x={1165} y={1333} w={32} fill="#1010c8">1.75</Label>
        </>
      )}
      scale={(
        <>
          <Ticks x={1205} from={1338.5} to={1425} step={9.7} />
          <AxisLabels x={1205} items={[[1373.5, '2.50', 33], [1423, '0.00', 33]]} />
          <CloseBox x={1286} y={1330} />
        </>
      )}
    />
    <ChartPane
      {...minPane}
      top={1467}
      bottom={1598}
      plot={(
        <>
          <MinuteBackdrop top={1467} bottom={1598} />
          <HLines ys={[1495, 1532.7]} />
          <DayLine top={1467} bottom={1598} />
          <HLines ys={[1570]} color="#151515" width={1.4} />
          <Line
            xs={minX}
            ys={[1586.4, 1552.3, 1519.4, 1526, 1524.2, 1529, 1546.4, 1570.5, 1571.6, 1571.6, 1563.5, 1558.3, 1550, 1534.6, 1519, 1505, 1496.4, 1494.2, 1512, 1514.2, 1529, 1515.3, 1511.2, 1498.6]}
            color="#dd1410"
            width={3}
          />
          <Line
            xs={minX}
            ys={[1581.6, 1568.7, 1555, 1550, 1547, 1546.8, 1550, 1559.4, 1564.6, 1565, 1562.4, 1558, 1552.7, 1547.5, 1540.9, 1536.4, 1535.7, 1535, 1537.5, 1535, 1534.6, 1520.9, 1512.3, 1504.6]}
            color="#0c0cc4"
            width={3}
          />
          <Marker x={1114} y={1480} />
          <Label x={1126} y={1480} w={32} fill={RED}>1.94</Label>
          <Label x={1165} y={1480} w={32} fill="#1010c8">1.79</Label>
        </>
      )}
      scale={(
        <>
          <Ticks x={1205} from={1472.4} to={1570} step={7.5} />
          <AxisLabels x={1205} items={[[1493.5, '2.00', 33], [1531, '1.00', 33], [1568.7, '0.00', 33]]} />
          <CloseBox x={1286} y={1477} />
        </>
      )}
    />
    <ChartPane
      {...minPane}
      top={1598}
      bottom={1747}
      last
      plot={(
        <>
          <MinuteBackdrop top={1598} bottom={1747} />
          <DayLine top={1598} bottom={1747} />
          <HLines ys={[1642, 1688.7, 1735.4]} color="#151515" width={1.4} />
          <Line
            xs={minX}
            ys={[1689.4, 1689.4, 1676.9, 1682.8, 1685, 1685, 1685.4, 1687.2, 1687.6, 1686.9, 1684, 1681, 1678.3, 1672.4, 1667.6, 1658.3, 1657.6, 1650, 1651.7, 1641.7, 1641.3, 1632.4, 1631.7, 1626]}
            color="#dc143c"
            width={3}
          />
          <Label x={1165} y={1610.5} w={32} fill={colors.crimson}>0.68</Label>
        </>
      )}
      scale={(
        <>
          <Ticks x={1205} from={1606} to={1740} step={9.4} />
          <AxisLabels x={1205} items={[[1640.5, '0.50', 33], [1687, '0.00', 33], [1734, '-0.50', 42]]} />
          <CloseBox x={1286} y={1607.5} />
        </>
      )}
    />
    <TimeAxis>
      <TimeCell $w={489} $pad={4} $bold>10/27</TimeCell>
      <TimeCell $w={445} $pad={2}><Squeeze $sx={0.87} $from="left">09:10</Squeeze></TimeCell>
      <TimeCell $w={262} $pad={2}><Squeeze $sx={0.87} $from="left">09:20</Squeeze></TimeCell>
      <TimeCell $w={97} $pad={11}><Squeeze $sx={0.88} $from="left">09:22:00</Squeeze></TimeCell>
    </TimeAxis>
  </Panes>
);

export default function App() {
  return (
    <>
      <GlobalStyle />
      <Page>
        <Window $height={631}>
          <HeaderArea>
            <Toolbar minute={false} />
            <QuoteRow />
          </HeaderArea>
          <DayChart />
        </Window>
        <Splitter />
        <Window $height={1133}>
          <HeaderArea>
            <Toolbar minute />
            <QuoteRow />
          </HeaderArea>
          <MinuteChart />
        </Window>
      </Page>
    </>
  );
}
